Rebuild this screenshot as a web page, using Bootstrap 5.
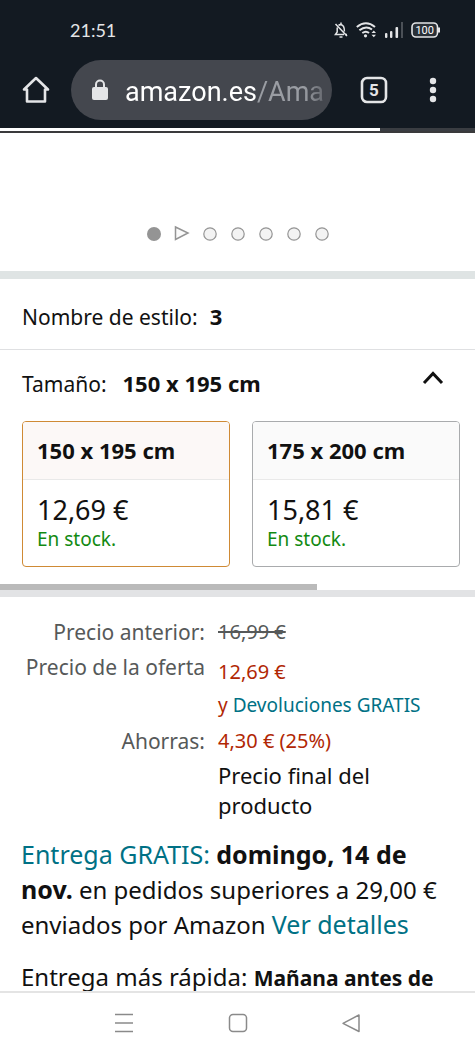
<!DOCTYPE html>
<html lang="es">
<head>
<meta charset="utf-8">
<meta name="viewport" content="width=device-width, initial-scale=1">
<title>Amazon.es</title>
<link href="https://cdn.jsdelivr.net/npm/bootstrap@5.3.0/dist/css/bootstrap.min.css" rel="stylesheet">
<style>
  body { font-family: "Noto Sans", "Open Sans", sans-serif; font-size: 22px; line-height: 30px; color: #111; background: #fff; }
  button { background: none; border: 0; padding: 0; color: inherit; }
  svg { display: block; }
  a { color: #007185; text-decoration: none; }
  .browser { background: #131a22; color: #e4e5e7; font-family: Roboto, sans-serif; }
  .status { height: 60px; padding: 0 34px 0 70px; }
  .clock { font-family: Lato, sans-serif; font-size: 18px; }
  .toolbar { height: 68px; padding: 0 22px 8px 21px; }
  .address { height: 60px; min-width: 0; margin: 0 28px 0 20px; padding: 0 10px 0 20px; background: #44474e; }
  .url { font-size: 27px; line-height: 32px; color: #fff; -webkit-mask-image: linear-gradient(90deg, #000 90%, rgba(0,0,0,.4)); mask-image: linear-gradient(90deg, #000 90%, rgba(0,0,0,.4)); }
  .url span { color: #9a9da3; }
  .menu-key { margin: 0 16px 0 41px; }
  .loading { height: 5px; background: #3a3d42; border-bottom: 2px solid #3a3a3c; }
  .loading div { width: 80%; height: 3px; background: #fff; }
  .gallery { height: 146px; padding-top: 87px; border-bottom: 8px solid #dfe4e4; }
  .gallery button { width: 28px; height: 28px; }
  .caption { font-size: 21px; }
  .style-row { padding: 22px 22px 17px; border-bottom: 1px solid #dfe0e2; }
  .size-row { padding: 18px 30px 22px 22px; }
  .sizes { padding: 0 15px 17px 22px; gap: 22px; }
  .size-option { flex: 1 1 0; text-align: left; border: 1px solid #a9abad; border-radius: 4px; overflow: hidden; }
  .size-option .top { padding: 13px 14px 14px; font-weight: 700; background: #fafafa; border-bottom: 1px solid #e9e9e9; }
  .size-option .bottom { padding: 15px 14px 13px; }
  .size-option.chosen { border-color: #cf8a35; }
  .size-option.chosen .top { background: #fcf8f7; }
  .amount { font-size: 27px; }
  .stock { font-size: 19px; line-height: 28px; color: #128a12; }
  .scroller { height: 13px; border-bottom: 7px solid #e2e3e5; }
  .scroller div { width: 66.7%; height: 6px; background: #bababa; }
  .prices { margin: 20px 0 0 21px; }
  .prices th { font-size: 21px; font-weight: 400; width: 184px; text-align: right; vertical-align: top; white-space: nowrap; color: #565959; padding: 0 0 5px; }
  .prices td { padding: 0 0 5px 13px; vertical-align: top; }
  .prices .offer td { padding: 5px 0 0 13px; }
  .prices .returns td { padding: 3px 0 3px 13px; }
  .prices .saving > * { padding-top: 3px; padding-bottom: 4px; }
  .small-price { font-size: 20px; color: #b12704; }
  .small-price a, .small-price.note { font-size: 19px; }
  .old-price { color: #565959; }
  .delivery { padding: 12px 21px 0; font-size: 24px; line-height: 34px; white-space: nowrap; }
  .delivery p { margin: 0 0 18px; }
  .delivery strong, .delivery a { font-size: 25px; }
  .delivery .soon { font-size: 21px; }
  .sysnav { height: 65px; padding: 0 24% 3px; border-top: 2px solid #e4e4e4; }
</style>
</head>
<body>
<div class="d-flex flex-column vh-100">
  <header class="browser flex-shrink-0">
    <div class="status d-flex align-items-center">
      <span class="clock me-auto">21:51</span>
      <div class="d-flex align-items-center">
        <svg width="14" height="17" viewBox="0 0 14 17" fill="none" stroke="#e4e5e7" stroke-width="1.5"><path d="M4.500 3.400Q7 1.500 9.400 4.200 10.400 6 10.400 9.500M3.200 5.500V10L1.400 12.500H10M1.500 2 13 14"/><path d="M5.500 15h3M11 12.500h2M7 .5v2"/></svg>
        <svg class="ms-2" width="21" height="16" viewBox="0 0 21 16" fill="none" stroke="#e4e5e7" stroke-width="2"><path d="M.8 5Q10-2.500 19 5M3.400 8.200Q10 3 16 7.500M6.300 11Q10 8.400 13 11"/><circle cx="9.500" cy="13.800" r="1.600" fill="#e4e5e7" stroke="none"/><path d="m15.500 11 2.300-2.500L20 11zM15.500 12.800l2.300 2.500 2.200-2.500z" fill="#e4e5e7" stroke="none"/></svg>
        <svg class="ms-2" width="18" height="16" viewBox="0 0 18 16" fill="#e4e5e7"><rect y="11" width="2.400" height="5" rx="1"/><rect x="5" y="9" width="2.400" height="7" rx="1"/><rect x="10.500" y="5" width="2.600" height="11" rx="1"/><rect x="16" width="2" height="16" fill="#4b5057"/></svg>
        <svg class="ms-2" width="30" height="16" viewBox="0 0 30 16"><rect x="1" y="1" width="25.500" height="14" rx="4" fill="#2a3037" stroke="#e4e5e7" stroke-width="1.600"/><path d="M28 5.500v5" stroke="#e4e5e7" stroke-width="2"/><text x="13.700" y="12" font-size="11" text-anchor="middle" fill="#fff">100</text></svg>
      </div>
    </div>
    <div class="toolbar d-flex align-items-center">
      <button type="button" aria-label="Inicio"><svg width="30" height="30" viewBox="0 0 30 30" fill="none" stroke="#e4e5e7" stroke-width="2.600" stroke-linejoin="round" stroke-linecap="round"><path d="M6 14.500H3L15 3 27 14.500H24V26.500H6V14.500"/></svg></button>
      <button type="button" class="address d-flex align-items-center flex-grow-1 rounded-pill">
        <svg class="flex-shrink-0" width="18" height="22" viewBox="0 0 18 22"><rect x="1" y="8" width="16" height="13" rx="2" fill="#e4e5e7"/><path d="M5 9V5.500a4 4 0 0 1 8 0V9" fill="none" stroke="#e4e5e7" stroke-width="2"/></svg>
        <span class="url ms-3 text-nowrap text-start pt-1">amazon.es<span>/Ama</span></span>
      </button>
      <button type="button" aria-label="Pestañas"><svg width="28" height="28" viewBox="0 0 28 28"><rect x="2" y="2" width="24" height="24" rx="5" fill="none" stroke="#e4e5e7" stroke-width="2.600"/><text x="14" y="20" font-size="17" font-weight="700" text-anchor="middle" fill="#e4e5e7">5</text></svg></button>
      <button type="button" class="menu-key" aria-label="Menú"><svg width="8" height="26" viewBox="0 0 8 26" fill="#e4e5e7"><circle cx="4" cy="4" r="3.200"/><circle cx="4" cy="13" r="3.200"/><circle cx="4" cy="22" r="3.200"/></svg></button>
    </div>
    <div class="loading"><div></div></div>
  </header>

  <main class="flex-grow-1 overflow-hidden">
    <div class="gallery d-flex justify-content-center">
      <button type="button" aria-label="Imagen 1"><svg width="28" height="28"><circle cx="14" cy="14" r="7" fill="#949494"/></svg></button>
      <button type="button" aria-label="Vídeo"><svg width="28" height="28"><path d="M7.500 7 20 13 7.500 19.500z" fill="#fafafa" stroke="#949494" stroke-width="1.500"/></svg></button>
      <button type="button" aria-label="Imagen 2"><svg width="28" height="28"><circle cx="14" cy="14" r="6.200" fill="#f3f3f3" stroke="#949494" stroke-width="1.200"/></svg></button>
      <button type="button" aria-label="Imagen 3"><svg width="28" height="28"><circle cx="14" cy="14" r="6.200" fill="#f3f3f3" stroke="#949494" stroke-width="1.200"/></svg></button>
      <button type="button" aria-label="Imagen 4"><svg width="28" height="28"><circle cx="14" cy="14" r="6.200" fill="#f3f3f3" stroke="#949494" stroke-width="1.200"/></svg></button>
      <button type="button" aria-label="Imagen 5"><svg width="28" height="28"><circle cx="14" cy="14" r="6.200" fill="#f3f3f3" stroke="#949494" stroke-width="1.200"/></svg></button>
      <button type="button" aria-label="Imagen 6"><svg width="28" height="28"><circle cx="14" cy="14" r="6.200" fill="#f3f3f3" stroke="#949494" stroke-width="1.200"/></svg></button>
    </div>

    <div class="style-row d-flex align-items-baseline"><span class="caption">Nombre de estilo:</span><strong class="ms-2 ps-1">3</strong></div>

    <div class="size-row d-flex align-items-baseline">
      <span class="caption">Tamaño:</span><strong class="ms-3 me-auto">150 x 195 cm</strong>
      <button type="button" class="align-self-start" aria-label="Contraer"><svg width="24" height="20" viewBox="0 0 24 20" fill="none" stroke="#111" stroke-width="3"><path d="M3 15 12 5.500 21 15"/></svg></button>
    </div>
    <div class="sizes d-flex">
      <button type="button" class="size-option chosen">
        <div class="top">150 x 195 cm</div>
        <div class="bottom"><div class="amount">12,69 €</div><div class="stock">En stock.</div></div>
      </button>
      <button type="button" class="size-option">
        <div class="top">175 x 200 cm</div>
        <div class="bottom"><div class="amount">15,81 €</div><div class="stock">En stock.</div></div>
      </button>
    </div>
    <div class="scroller"><div></div></div>

    <table class="prices">
      <tr><th scope="row">Precio anterior:</th><td class="small-price old-price"><s>16,99 €</s></td></tr>
      <tr class="offer"><th scope="row">Precio de la oferta</th><td class="small-price">12,69 €</td></tr>
      <tr class="returns"><td></td><td class="small-price note">y <a href="#">Devoluciones GRATIS</a></td></tr>
      <tr class="saving"><th scope="row">Ahorras:</th><td class="small-price">4,30 € (25%)</td></tr>
      <tr><td></td><td>Precio final del<br>producto</td></tr>
    </table>

    <div class="delivery">
      <p><a href="#">Entrega GRATIS:</a> <strong>domingo, 14 de<br>nov.</strong> en pedidos superiores a 29,00 €<br>enviados por Amazon <a href="#">Ver detalles</a></p>
      <p class="mb-0">Entrega más rápida: <strong class="soon">Mañana antes de</strong></p>
    </div>
  </main>

  <nav class="sysnav flex-shrink-0 d-flex justify-content-between align-items-center bg-white">
    <button type="button" aria-label="Recientes"><svg width="20" height="20" fill="none" stroke="#8a8a8a" stroke-width="1.500"><path d="M1 1.500h18M1 10h18M1 18.500h18"/></svg></button>
    <button type="button" aria-label="Inicio del sistema"><svg width="20" height="20" fill="none" stroke="#8a8a8a" stroke-width="1.500"><rect x="1.500" y="1.500" width="17" height="17" rx="3.500"/></svg></button>
    <button type="button" aria-label="Atrás"><svg width="20" height="20" fill="none" stroke="#8a8a8a" stroke-width="1.500" stroke-linejoin="round"><path d="M18 2v16.500L2 10.300z"/></svg></button>
  </nav>
</div>
<script src="https://cdn.jsdelivr.net/npm/bootstrap@5.3.0/dist/js/bootstrap.bundle.min.js"></script>
</body>
</html>
